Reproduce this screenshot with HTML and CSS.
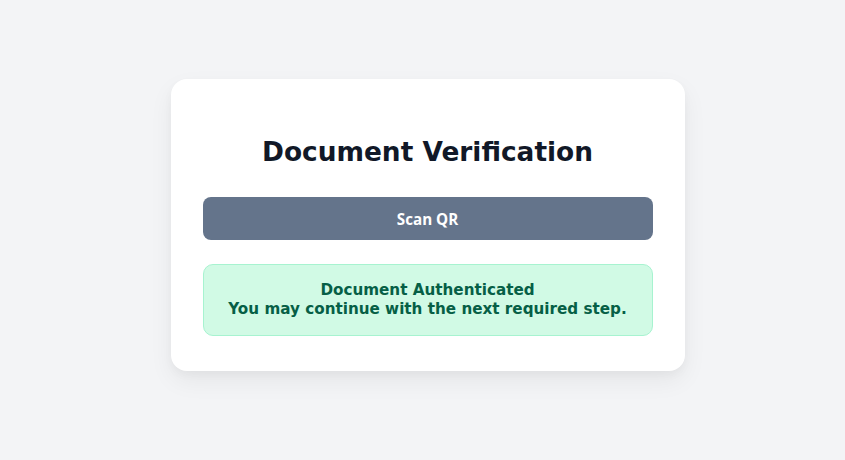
FILE: index.html
```html
<!DOCTYPE html>
<html>
<head>
<meta charset="utf-8">
<link rel="stylesheet" href="styles.css">
</head>
<body>
<main class="page">
  <section class="card">
    <h1 class="title">Document Verification</h1>
    <button class="scan-btn">Scan QR</button>
    <div class="status">
      Document Authenticated<br>
      You may continue with the next required step.
    </div>
  </section>
</main>
</body>
</html>
```

FILE: styles.css
```css
html, body {
  margin: 0;
  padding: 0;
  background: #f3f4f6;
  font-family: "DejaVu Sans", sans-serif;
}
.page {
  height: 460px;
  display: flex;
  justify-content: center;
  align-items: center;
}
.card {
  box-sizing: border-box;
  width: 514px;
  height: 292px;
  margin: -10px 0 0 10px;
  background: #ffffff;
  border-radius: 16px;
  padding: 32px;
  box-shadow: 0 10px 25px rgba(0, 0, 0, 0.06), 0 4px 10px rgba(0, 0, 0, 0.03);
  display: flex;
  flex-direction: column;
}
.title {
  margin: 26px 0 30px;
  font-size: 26.4px;
  line-height: 30px;
  font-weight: bold;
  color: #111827;
  text-align: center;
}
.scan-btn {
  height: 43px;
  border: none;
  border-radius: 8px;
  background: #64748b;
  color: #ffffff;
  font-family: "Open Sans", sans-serif;
  font-size: 15.2px;
  font-weight: bold;
}
.status {
  margin-top: 24px;
  box-sizing: border-box;
  height: 72px;
  background: #d1fae5;
  border: 1px solid #a7f3d0;
  border-radius: 10px;
  color: #065f46;
  font-size: 15.2px;
  font-weight: bold;
  line-height: 19px;
  text-align: center;
  display: flex;
  flex-direction: column;
  justify-content: center;
}
```
